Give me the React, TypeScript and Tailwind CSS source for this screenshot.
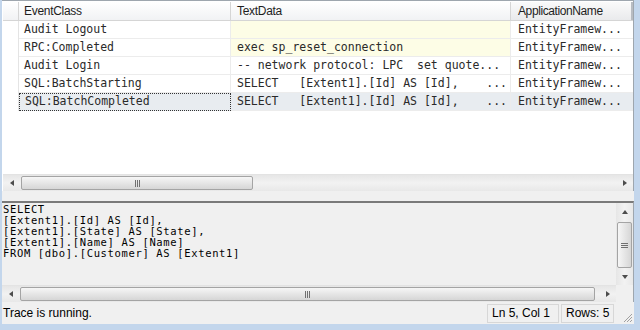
import React from "react";

const rows = [
  { ev: "Audit Logout", text: "", app: "EntityFramew...", yellow: true },
  { ev: "RPC:Completed", text: "exec sp_reset_connection", app: "EntityFramew...", yellow: true },
  { ev: "Audit Login", text: "-- network protocol: LPC  set quote...", app: "EntityFramew..." },
  { ev: "SQL:BatchStarting", text: "SELECT   [Extent1].[Id] AS [Id],    ...", app: "EntityFramew..." },
  { ev: "SQL:BatchCompleted", text: "SELECT   [Extent1].[Id] AS [Id],    ...", app: "EntityFramew...", selected: true },
];

const sql = [
  "SELECT",
  "[Extent1].[Id] AS [Id],",
  "[Extent1].[State] AS [State],",
  "[Extent1].[Name] AS [Name]",
  "FROM [dbo].[Customer] AS [Extent1]",
];

function Arrow({ dir }: { dir: "left" | "right" | "up" | "down" }) {
  const pts = {
    left: "5,1 1,4 5,7",
    right: "1,1 5,4 1,7",
    up: "1,5 4,1 7,5",
    down: "1,1 4,5 7,1",
  }[dir];
  const vertical = dir === "up" || dir === "down";
  return (
    <svg width={vertical ? 8 : 6} height={vertical ? 6 : 8} viewBox={vertical ? "0 0 8 6" : "0 0 6 8"}>
      <polygon points={pts} fill="#4d4d4d" />
    </svg>
  );
}

function HScroll({ thumbLeft, thumbWidth, corner }: { thumbLeft: number; thumbWidth: number; corner?: boolean }) {
  return (
    <div className="flex h-[17px] shrink-0">
      <div className="relative flex-1 bg-gradient-to-b from-[#e6e6e6] via-[#f2f2f2] to-[#e8e8e8] border-t border-[#e3e3e3]">
        <div className="absolute left-0 top-0 h-full w-[17px] flex items-center justify-center">
          <Arrow dir="left" />
        </div>
        <div
          className="absolute top-[1px] bottom-[1px] rounded-[2px] border border-[#a4a4a4] bg-gradient-to-b from-[#f6f6f6] via-[#e6e6e6] to-[#d6d6d6] flex items-center justify-center gap-[1px]"
          style={{ left: thumbLeft, width: thumbWidth }}
        >
          <span className="w-px h-[7px] bg-[#707070]" />
          <span className="w-px h-[7px] bg-[#707070]" />
          <span className="w-px h-[7px] bg-[#707070]" />
        </div>
        <div className="absolute right-0 top-0 h-full w-[17px] flex items-center justify-center">
          <Arrow dir="right" />
        </div>
      </div>
      {corner && <div className="w-[17px] bg-[#f0f0f0]" />}
    </div>
  );
}

function VScroll() {
  return (
    <div className="relative w-[17px] shrink-0 bg-gradient-to-r from-[#e6e6e6] via-[#f2f2f2] to-[#e8e8e8]">
      <div className="absolute top-0 left-0 w-full h-[17px] flex items-center justify-center">
        <Arrow dir="up" />
      </div>
      <div className="absolute left-[1px] right-[1px] top-[19px] bottom-[17px] rounded-[2px] border border-[#a4a4a4] bg-gradient-to-r from-[#f6f6f6] via-[#e6e6e6] to-[#d6d6d6] flex flex-col items-center justify-center gap-[1px]">
        <span className="h-px w-[7px] bg-[#707070]" />
        <span className="h-px w-[7px] bg-[#707070]" />
        <span className="h-px w-[7px] bg-[#707070]" />
      </div>
      <div className="absolute bottom-0 left-0 w-full h-[17px] flex items-center justify-center">
        <Arrow dir="down" />
      </div>
    </div>
  );
}

export default function App() {
  const sans = "font-['Liberation_Sans',Arial,sans-serif]";
  const mono = "font-['DejaVu_Sans_Mono','Liberation_Mono',monospace]";
  return (
    <div className="w-[640px] h-[330px] bg-[#c3d6ec] pl-[2px] pr-[6px] pb-[6px] overflow-hidden">
      <div className="h-full flex flex-col bg-[#f0f0f0]">
        {/* trace grid */}
        <div className="h-[191px] flex flex-col bg-white border-t border-r border-[#9ea6ae] pt-px pl-px shrink-0">
          <div className={`flex h-[19px] shrink-0 text-[12px] text-[#1e1e1e] ${sans} bg-gradient-to-b from-white to-[#f1f2f4] border-b border-[#d5d5d5]`}>
            <div className="w-[16px] border-r border-[#d5d5d5] shrink-0" />
            <div className="w-[212px] border-r border-[#d5d5d5] pl-[5px] flex items-center tracking-[-0.3px]">EventClass</div>
            <div className="w-[280px] border-r border-[#d5d5d5] pl-[6px] flex items-center tracking-[-0.3px]">TextData</div>
            <div className="flex-1 pl-[7px] flex items-center tracking-[-0.4px] border-r-2 border-[#b8bcc2] bg-gradient-to-b from-[#fafafa] to-[#e9eaec]">ApplicationName</div>
          </div>
          <div className={`flex-1 text-[11.5px] text-[#2a2a2a] ${mono}`}>
            {rows.map((r) => (
              <div key={r.ev} className={`flex h-[18px] ${r.selected ? "bg-[#e8ecf0]" : ""}`}>
                <div className="w-[16px] shrink-0 border-r border-[#e4e4e4] bg-white" />
                <div className={`w-[212px] shrink-0 pl-[5px] flex items-center border-b border-r ${r.selected ? "border border-dotted border-[#333]" : "border-[#ececec]"}`}>
                  {r.ev}
                </div>
                <div className={`w-[280px] shrink-0 pl-[6px] flex items-center whitespace-pre border-b border-r border-[#ececec] ${r.yellow ? "bg-[#fdfde6]" : ""}`}>
                  {r.text}
                </div>
                <div className="flex-1 pl-[7px] flex items-center border-b border-[#ececec]">{r.app}</div>
              </div>
            ))}
          </div>
          <HScroll thumbLeft={18} thumbWidth={232} />
        </div>
        {/* splitter */}
        <div className="h-[10px] shrink-0 bg-[#f0f0f0]" />
        {/* text pane */}
        <div className="h-[101px] shrink-0 flex flex-col border-t-2 border-[#7a7a7a] border-r border-r-[#9ea6ae]">
          <div className="flex-1 flex min-h-0">
            <div className={`flex-1 pl-[1px] pt-[1px] text-[10.5px] tracking-[0.65px] leading-[11px] text-black ${mono} whitespace-pre`}>
              {sql.map((l) => (
                <div key={l} className="h-[11px]">{l}</div>
              ))}
            </div>
            <VScroll />
          </div>
          <HScroll thumbLeft={18} thumbWidth={575} corner />
        </div>
        {/* status bar */}
        <div className={`flex-1 flex items-center text-[12px] text-black ${sans}`}>
          <div className="flex-1 pl-[1px]">Trace is running.</div>
          <div className="w-[72px] h-[19px] border border-[#d7d7d7] flex items-center pl-[4px]">Ln 5, Col 1</div>
          <div className="w-[53px] h-[19px] ml-[2px] border border-[#d7d7d7] flex items-center pl-[4px]">Rows: 5</div>
          <div className="w-[20px] h-full flex items-end justify-end pr-[1px] pb-[1px]">
            <svg width="11" height="11" viewBox="0 0 11 11">
              <path d="M10 2 L2 10 M10 5 L5 10 M10 8 L8 10" stroke="#a0a0a0" strokeWidth="1" />
            </svg>
          </div>
        </div>
      </div>
    </div>
  );
}
